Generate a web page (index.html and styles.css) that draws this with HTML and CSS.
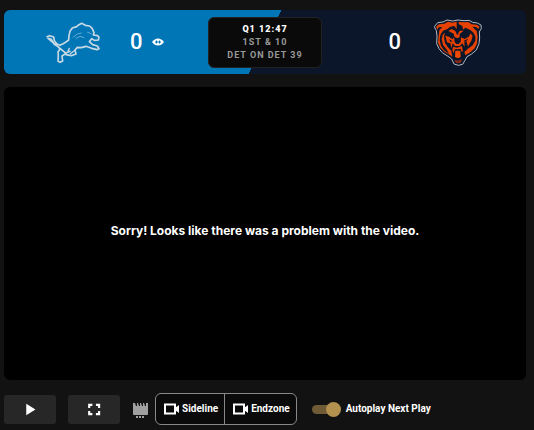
FILE: index.html
```html
<!DOCTYPE html>
<html lang="en">
<head>
<meta charset="utf-8">
<title>Game film</title>
<link rel="stylesheet" href="styles.css">
</head>
<body>
<header class="scoreboard">
  <div class="team away">
    <svg class="logo" viewBox="0 0 198 168" role="img" aria-label="DET">
      <g fill="none" stroke="#c8d9e4" stroke-width="5" stroke-linejoin="round" stroke-linecap="round">
        <path d="M21 68 L29 65 L41 69 L43 80 L51 90 L60 94 L72 88 L86 78 L87 64 L90 52 L97 42 L110 38 L117 32 L125 28 L136 34 L149 36 L157 44 L162 56 L160 63 L173 65 L177 70 L175 78 L163 79 L155 74 L148 83 L158 92 L172 96 L177 104 L171 107 L155 103 L138 97 L124 101 L112 100 L105 108 L108 120 L94 125 L78 122 L77 117 L90 112 M78 118 L66 126 L68 141 L60 145 L54 141 L55 126 L54 114 L60 105 L54 98 L43 91 L34 76 L24 73 Z"/>
        <path d="M88 103 L84 111 M103 110 L91 119" stroke-width="4"/>
        <path d="M99 70 L112 60 L124 57 M108 73 L120 67 L132 71 M143 55 L154 59" stroke="#66a9d0" stroke-width="3"/>
      </g>
    </svg>
    <span class="score">0</span>
    <svg class="ball" viewBox="0 0 12 8" role="img" aria-label="Possession"><path fill="#fff" d="M0 4Q2.500 .5 6 .5T12 4Q9.500 7.500 6 7.500T0 4Z"/><path d="M3 4h6M4.500 2.500v3M7.500 2.500v3" stroke="#0076b6"/></svg>
  </div>
  <div class="situation">
    <strong>Q1 12:47</strong>
    <span>1ST &amp; 10</span>
    <span>DET ON DET 39</span>
  </div>
  <div class="team home">
    <span class="score">0</span>
    <svg class="logo" viewBox="0 0 198 168" role="img" aria-label="CHI">
      <path fill="#0b162a" stroke="#b4b9c2" stroke-width="3" d="M28 38 L38 26 L54 24 L66 18 L83 21 L99 18 L117 20 L132 19 L143 25 L157 27 L168 33 L169 43 L163 54 L164 72 L162 89 L154 108 L140 120 L126 128 L120 139 L113 151 L100 154 L87 150 L80 135 L69 127 L52 116 L42 104 L35 89 L36 66 L34 50 Z"/>
      <g fill="#e64100">
        <path d="M33 38 L42 31 L58 29 L69 23 L82 26 L95 23 L95 46 L88 36 L76 38 L66 46 L54 50 L46 63 L44 79 L48 95 L57 109 L72 119 L66 108 L54 93 L50 76 L53 63 L60 56 L57 70 L60 87 L68 99 L79 110 L82 129 L75 123 L58 113 L46 101 L39 86 L41 65 L43 49 L52 39 L41 40 L38 47 Z"/>
        <path d="M101 24 L119 25 L130 24 L140 31 L155 32 L164 38 L160 45 L153 39 L142 38 L155 51 L158 69 L156 88 L149 103 L136 115 L121 124 L118 114 L128 105 L143 94 L151 80 L151 67 L145 56 L136 48 L121 41 L114 47 L112 36 L101 30 Z"/>
        <path d="M70 51 L80 45 L91 51 L97 64 L104 50 L116 50 L104 60 L104 69 L97 73 L88 68 L86 59 Z"/>
        <path d="M61 65 L72 68 L82 76 L87 70 L89 84 L94 90 L101 90 L107 83 L108 70 L119 75 L131 68 L137 58 L143 66 L139 80 L133 90 L129 98 L124 82 L118 82 L119 99 L112 88 L104 96 L90 96 L83 88 L79 103 L76 88 L66 85 Z"/>
        <path d="M84 98 L96 101 L111 96 L114 113 L109 112 L107 105 L89 106 L86 118 L82 109 Z"/>
      </g>
      <path fill="#0b162a" d="M89 77 L97 74 L106 77 L103 85 L96 88 L90 83 Z M72 76 L82 81 L77 85 Z M116 80 L130 74 L124 82 Z"/>
      <path fill="#f04a00" d="M91 110 L106 110 L107 129 L99 133 L90 129 Z"/>
      <path fill="#8d2a18" d="M88 137 L98 140 L111 136 L107 146 L93 147 Z"/>
    </svg>
  </div>
</header>
<main class="player">
  <p>Sorry! Looks like there was a problem with the video.</p>
</main>
<footer class="controls">
  <button class="btn" type="button" aria-label="Play"><svg class="icon" viewBox="0 0 24 24"><path d="M6 4v16l13-8z"/></svg></button>
  <button class="btn" type="button" aria-label="Full screen"><svg class="icon" viewBox="0 0 24 24"><path d="M3 4h6v3H6v3H3zM14 4h6v6h-3V7h-3zM3 14h3v3h3v3H3zM17 14h3v6h-6v-3h3z"/></svg></button>
  <svg class="film" viewBox="0 0 16 18" role="img" aria-label="Camera angle"><path fill="#a0a0a0" d="M1 3h2l1 3h1V3h1l1 3h1V3h1l1 3h1V3h1l1 3h1V3h2v11q0 1-1 1H2q-1 0-1-1zM4 16h2v2H4zM7 16h2v2H7zM10 16h2v2h-2z"/></svg>
  <div class="angles">
    <button type="button"><svg class="camera" viewBox="0 0 16 12"><path d="M1 1.500h10v9H1z"/><path class="lens" d="M11 5l4-3v8l-4-3z"/></svg>Sideline</button>
    <button type="button"><svg class="camera" viewBox="0 0 16 12"><path d="M1 1.500h10v9H1z"/><path class="lens" d="M11 5l4-3v8l-4-3z"/></svg>Endzone</button>
  </div>
  <label class="autoplay"><input type="checkbox" role="switch" checked>Autoplay Next Play</label>
</footer>
</body>
</html>
```
FILE: styles.css
```css
* { box-sizing: border-box; }

body {
  margin: 0;
  padding: 10px 8px 5px 4px;
  min-height: 100vh;
  display: flex;
  flex-direction: column;
  background: #121212;
  color: #fff;
  font-family: Inter, "Liberation Sans", sans-serif;
}

.scoreboard {
  display: grid;
  grid-template-columns: 1fr 114px 1fr;
  align-items: center;
  height: 64px;
  border-radius: 6px;
  background: linear-gradient(117deg, #0076b6 50%, #0b162a 50%);
}

.team {
  display: flex;
  align-items: center;
}

.away { padding-left: 36px; }
.home { padding-right: 35px; justify-content: flex-end; }
.logo { width: 66px; height: 56px; }

.score {
  font: 500 22px/28px Roboto, sans-serif;
}

.away .score { margin: 0 9px 0 24px; }
.home .score { margin-right: 24px; }
.ball { width: 12px; height: 8px; }

.situation {
  padding: 5px 0;
  display: flex;
  flex-direction: column;
  align-items: center;
  border: 1px solid #222;
  border-radius: 6px;
  background: #0a0a0a;
  color: #999;
  font: 700 9px/13px Roboto, sans-serif;
  letter-spacing: 1px;
}

.situation strong { color: #fff; font-weight: 900; }

.player {
  flex: 1;
  margin: 13px 0;
  padding-bottom: 6px;
  display: flex;
  align-items: center;
  justify-content: center;
  border-radius: 6px;
  background: #000;
}

.player p {
  margin: 0;
  font-size: 12px;
  font-weight: 700;
  line-height: 16px;
}

.controls {
  display: flex;
  align-items: center;
}

.controls button {
  padding: 0;
  color: #fff;
  border: 0;
  font: 700 10px/16px Roboto, sans-serif;
}

.controls .btn {
  width: 52px;
  height: 29px;
  margin-right: 12px;
  display: flex;
  align-items: center;
  justify-content: center;
  border-radius: 3px;
  background: #272727;
}

.icon { width: 17px; height: 17px; fill: #fff; }
.film { width: 16px; height: 18px; margin-right: 7px; }

.angles {
  display: flex;
  height: 32px;
  border: 1px solid #888;
  border-radius: 6px;
  background: #0a0a0a;
  overflow: hidden;
}

.angles button {
  padding: 0 6px 0 8px;
  display: flex;
  align-items: center;
  gap: 2px;
  background: none;
}

.angles button + button { border-left: 1px solid #888; }
.camera { width: 16px; height: 12px; fill: none; stroke: #fff; stroke-width: 2; }
.camera .lens { fill: #fff; stroke: none; }

.autoplay {
  margin-left: 15px;
  display: flex;
  align-items: center;
  gap: 6px;
  font: 700 10px/16px Roboto, sans-serif;
}

.autoplay input {
  appearance: none;
  position: relative;
  width: 28px;
  height: 9px;
  margin: 0;
  border-radius: 5px;
  background: #6f5c36;
}

.autoplay input::before {
  content: "";
  position: absolute;
  top: -3px;
  left: 0;
  width: 15px;
  height: 15px;
  border-radius: 50%;
  background: #b3924f;
}

.autoplay input:checked::before { left: 14px; }
```
